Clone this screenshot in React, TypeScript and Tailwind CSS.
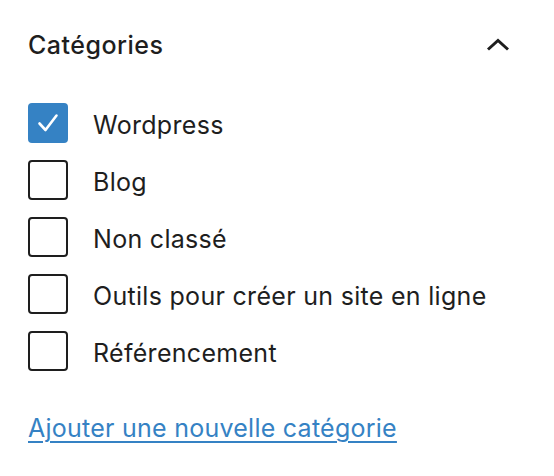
import React from 'react';

const categories = [
  { name: 'Wordpress', checked: true },
  { name: 'Blog', checked: false },
  { name: 'Non classé', checked: false },
  { name: 'Outils pour créer un site en ligne', checked: false },
  { name: 'Référencement', checked: false },
];

export default function App() {
  return (
    <div className="w-[554px] h-[476px] bg-white px-[28px] pt-[28px] text-[#1e1e1e] font-['Inter','Liberation_Sans',sans-serif]">
      {/* Header */}
      <div className="flex items-center justify-between h-[34px]">
        <h2 className="text-[25px] leading-[34px] font-medium tracking-[0.5px]">Catégories</h2>
        <svg width="24" height="14" viewBox="0 0 24 14" className="mr-[16px]" fill="none">
          <path d="M2 11.5 L12 2.5 L22 11.5" stroke="#1e1e1e" strokeWidth="3" />
        </svg>
      </div>

      {/* Checkbox list */}
      <div className="mt-[41px] flex flex-col gap-[17px]">
        {categories.map((cat) => (
          <label key={cat.name} className="flex items-center gap-[25px] h-[40px]">
            {cat.checked ? (
              <span className="w-[40px] h-[40px] rounded-[4px] bg-[#3582c4] flex items-center justify-center shrink-0">
                <svg width="24" height="24" viewBox="0 0 24 24" fill="none">
                  <path d="M3.5 12.5 L9.5 19 L20.5 4.5" stroke="white" strokeWidth="2.6" strokeLinecap="round" strokeLinejoin="round" />
                </svg>
              </span>
            ) : (
              <span className="w-[40px] h-[40px] rounded-[4px] border-2 border-[#1e1e1e] shrink-0" />
            )}
            <span className="text-[25px] leading-[32px] tracking-[0.3px] pt-[3px]">{cat.name}</span>
          </label>
        ))}
      </div>

      {/* Add link */}
      <a href="#" className="block mt-[41px] text-[25px] leading-[32px] tracking-[0.25px] text-[#3582c4] underline underline-offset-[4px] decoration-[2px]">
        Ajouter une nouvelle catégorie
      </a>
    </div>
  );
}
